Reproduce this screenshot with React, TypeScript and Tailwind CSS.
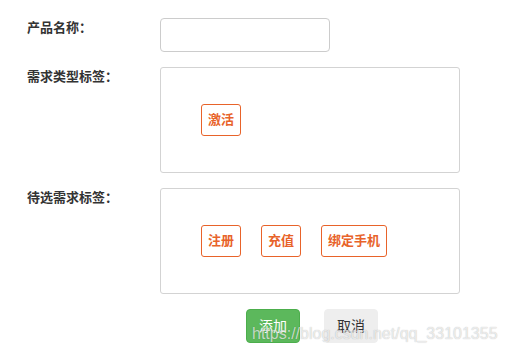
const selected = ["激活"];
const candidates = ["注册", "充值", "绑定手机"];

function Tag({ name }: { name: string }) {
  return (
    <span className="inline-flex h-[32px] items-center rounded-[3px] border border-[#e8632a] px-[6px] text-[13px] font-bold leading-[18px] text-[#e8632a]">
      {name}
    </span>
  );
}

function TagBox({ tags }: { tags: string[] }) {
  return (
    <div className="flex h-[106px] w-[300px] items-center gap-[20px] rounded-[3px] border border-[#d3d3d3] pl-[40px]">
      {tags.map((t) => (
        <Tag key={t} name={t} />
      ))}
    </div>
  );
}

function Row({ label, children }: { label: string; children: React.ReactNode }) {
  return (
    <div className="flex items-start">
      <div className="w-[133px] shrink-0 text-[13px] font-bold leading-[20px] text-[#333]">{label}</div>
      {children}
    </div>
  );
}

export default function App() {
  return (
    <div
      className="relative h-[357px] w-[507px] overflow-hidden bg-white pl-[27px] pt-[18px]"
      style={{ fontFamily: '"Liberation Sans", "Noto Sans CJK SC", sans-serif' }}
    >
      <div className="flex flex-col gap-[15px]">
        <Row label="产品名称：">
          <input
            type="text"
            className="h-[34px] w-[170px] rounded-[4px] border border-[#cccccc] px-2 text-[13px] outline-none"
          />
        </Row>
        <Row label="需求类型标签：">
          <TagBox tags={selected} />
        </Row>
        <Row label="待选需求标签：">
          <TagBox tags={candidates} />
        </Row>
        <div className="flex gap-[24px] pl-[219px]">
          <button className="h-[34px] w-[54px] rounded-[4px] border border-[#4cae4c] bg-[#5cb85c] text-[14px] leading-[20px] text-white">
            添加
          </button>
          <button className="h-[34px] w-[54px] rounded-[4px] border border-[#eeeeee] bg-[#eeeeee] text-[14px] leading-[20px] text-[#333]">
            取消
          </button>
        </div>
      </div>
      <div className="pointer-events-none absolute left-[252px] top-[325px] text-[16px] leading-[18px] text-white/70 [text-shadow:0_0_1px_rgba(0,0,0,0.3)]">
        https://blog.csdn.net/qq_33101355
      </div>
    </div>
  );
}
